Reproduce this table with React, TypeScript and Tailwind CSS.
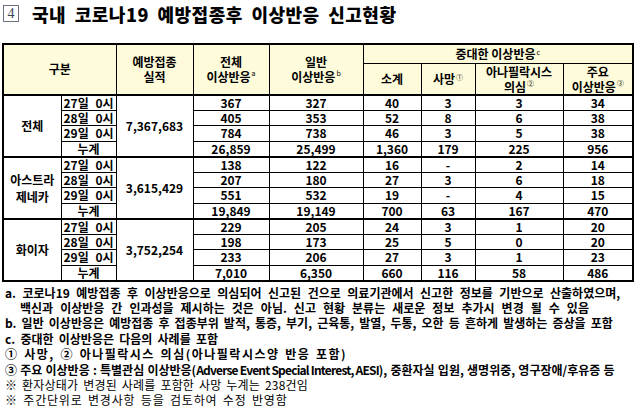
const groups = [
  {
    name: ["전체"],
    total: "7,367,683",
    rows: [
      ["27일", "0시", "367", "327", "40", "3", "3", "34"],
      ["28일", "0시", "405", "353", "52", "8", "6", "38"],
      ["29일", "0시", "784", "738", "46", "3", "5", "38"],
    ],
    sum: ["26,859", "25,499", "1,360", "179", "225", "956"],
  },
  {
    name: ["아스트라", "제네카"],
    total: "3,615,429",
    rows: [
      ["27일", "0시", "138", "122", "16", "-", "2", "14"],
      ["28일", "0시", "207", "180", "27", "3", "6", "18"],
      ["29일", "0시", "551", "532", "19", "-", "4", "15"],
    ],
    sum: ["19,849", "19,149", "700", "63", "167", "470"],
  },
  {
    name: ["화이자"],
    total: "3,752,254",
    rows: [
      ["27일", "0시", "229", "205", "24", "3", "1", "20"],
      ["28일", "0시", "198", "173", "25", "5", "0", "20"],
      ["29일", "0시", "233", "206", "27", "3", "1", "23"],
    ],
    sum: ["7,010", "6,350", "660", "116", "58", "486"],
  },
];

const cols = [58, 55, 77, 76, 94, 58, 54, 88, 70];

const cell = "border border-black p-0 text-center align-middle";

function Sup({ children }: { children: React.ReactNode }) {
  return (
    <span className="inline-block align-top text-[7px] leading-none font-normal ml-[1px] relative top-[1px]">
      {children}
    </span>
  );
}

function TwoLine({ a, b }: { a: React.ReactNode; b: React.ReactNode }) {
  return (
    <div className="flex flex-col items-center leading-[15px]">
      <div>{a}</div>
      <div>{b}</div>
    </div>
  );
}

export default function App() {
  return (
    <div
      className="w-[638px] h-[408px] bg-white text-black overflow-hidden"
      style={{ fontFamily: '"Noto Sans CJK KR", "Noto Sans", sans-serif' }}
    >
      {/* title */}
      <div className="flex items-center h-[43px] pb-[16px] pl-[3px]">
        <div className="w-[16px] h-[17px] border border-gray-500 flex items-center justify-center text-[14px] leading-none font-['Liberation_Serif'] text-gray-700">
          4
        </div>
        <h1 className="ml-[13px] text-[18px] font-black leading-none tracking-[0.5px] [word-spacing:4px]">
          국내 코로나19 예방접종후 이상반응 신고현황
        </h1>
      </div>

      {/* table */}
      <table className="ml-[2px] w-[630px] table-fixed border-collapse border-2 border-black text-[12px] font-bold leading-none">
        <colgroup>
          {cols.map((w, i) => (
            <col key={i} style={{ width: w }} />
          ))}
        </colgroup>
        <thead className="bg-[#fdfbd9]">
          <tr className="h-[19px]">
            <th colSpan={2} rowSpan={2} className={cell}>
              구분
            </th>
            <th rowSpan={2} className={cell}>
              <TwoLine a="예방접종" b="실적" />
            </th>
            <th rowSpan={2} className={cell}>
              <TwoLine a="전체" b={<>이상반응<Sup>a</Sup></>} />
            </th>
            <th rowSpan={2} className={cell}>
              <TwoLine a="일반" b={<>이상반응<Sup>b</Sup></>} />
            </th>
            <th colSpan={4} className={cell}>
              중대한 이상반응<Sup>c</Sup>
            </th>
          </tr>
          <tr className="h-[31px]">
            <th className={cell}>소계</th>
            <th className={cell}>
              사망<Sup>①</Sup>
            </th>
            <th className={cell}>
              <TwoLine a="아나필락시스" b={<>의심<Sup>②</Sup></>} />
            </th>
            <th className={cell}>
              <TwoLine a="주요" b={<>이상반응<Sup>③</Sup></>} />
            </th>
          </tr>
        </thead>
        <tbody>
          {groups.map((g, gi) => (
            <>
              {g.rows.map((r, ri) => (
                <tr key={`${gi}-${ri}`} className={"h-[15.5px]" + (ri === 0 ? " border-t-2 border-black" : "")}>
                  {ri === 0 && (
                    <td rowSpan={4} className={cell + " leading-[17px]"}>
                      {g.name.map((n, ni) => (
                        <div key={ni}>{n}</div>
                      ))}
                    </td>
                  )}
                  <td className={cell}>
                    <div className="flex justify-between px-[2px]">
                      <span>{r[0]}</span>
                      <span>{r[1]}</span>
                    </div>
                  </td>
                  {ri === 0 && (
                    <td rowSpan={4} className={cell}>
                      {g.total}
                    </td>
                  )}
                  {r.slice(2).map((v, vi) => (
                    <td key={vi} className={cell}>
                      {v}
                    </td>
                  ))}
                </tr>
              ))}
              <tr key={`${gi}-sum`} className="h-[15.5px]">
                <td className={cell + " border-t-[1.5px]"}>누계</td>
                {g.sum.map((v, vi) => (
                  <td key={vi} className={cell + " border-t-[1.5px]"}>
                    {v}
                  </td>
                ))}
              </tr>
            </>
          ))}
        </tbody>
      </table>

      {/* notes */}
      <div className="mt-[3px] pl-[5px] text-[12px] leading-[15.4px] whitespace-nowrap">
        <div className="font-bold [word-spacing:3.8px]">
          a. 코로나19 예방접종 후 이상반응으로 의심되어 신고된 건으로 의료기관에서 신고한 정보를 기반으로 산출하였으며,
        </div>
        <div className="font-bold pl-[15px] [word-spacing:4.3px]">
          백신과 이상반응 간 인과성을 제시하는 것은 아님. 신고 현황 분류는 새로운 정보 추가시 변경 될 수 있음
        </div>
        <div className="font-bold [word-spacing:2.4px]">
          b. 일반 이상반응은 예방접종 후 접종부위 발적, 통증, 부기, 근육통, 발열, 두통, 오한 등 흔하게 발생하는 증상을 포함
        </div>
        <div className="font-bold [word-spacing:2.5px]">c. 중대한 이상반응은 다음의 사례를 포함</div>
        <div className="font-bold tracking-[1.5px] [word-spacing:1.5px]">① 사망, ② 아나필락시스 의심(아나필락시스양 반응 포함)</div>
        <div className="font-bold [word-spacing:0.5px]">
          ③ 주요 이상반응 : 특별관심 이상반응(<span className="tracking-[-0.8px] [word-spacing:0px]">Adverse Event Special Interest, AESI</span>), 중환자실 입원, 생명위중, 영구장애/후유증 등
        </div>
        <div className="[word-spacing:2px] tracking-[0.2px]">※ 환자상태가 변경된 사례를 포함한 사망 누계는 238건임</div>
        <div className="[word-spacing:2px] tracking-[0.8px]">※ 주간단위로 변경사항 등을 검토하여 수정 반영함</div>
      </div>
    </div>
  );
}
